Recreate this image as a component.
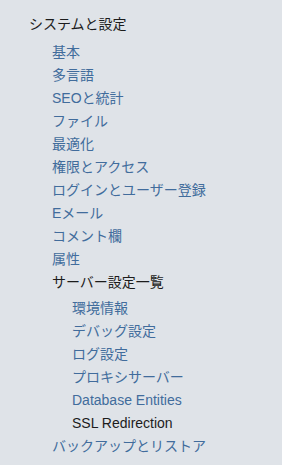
import React from "react";

const items: { label: string; active?: boolean; children?: { label: string; active?: boolean }[] }[] = [
  { label: "基本" },
  { label: "多言語" },
  { label: "SEOと統計" },
  { label: "ファイル" },
  { label: "最適化" },
  { label: "権限とアクセス" },
  { label: "ログインとユーザー登録" },
  { label: "Eメール" },
  { label: "コメント欄" },
  { label: "属性" },
  {
    label: "サーバー設定一覧",
    active: true,
    children: [
      { label: "環境情報" },
      { label: "デバッグ設定" },
      { label: "ログ設定" },
      { label: "プロキシサーバー" },
      { label: "Database Entities" },
      { label: "SSL Redirection", active: true },
    ],
  },
  { label: "バックアップとリストア" },
];

export default function App() {
  return (
    <div
      className="w-[282px] h-[465px] bg-[#dfe3e8] overflow-hidden pt-[13px] pl-[29px]"
      style={{ fontFamily: '"Liberation Sans", "Noto Sans CJK JP", sans-serif' }}
    >
      <div className="text-[14px] leading-[23px] text-[#1c1c1c]">システムと設定</div>
      <ul className="mt-[5px] pl-[23px] text-[14px] leading-[23px]">
        {items.map((it) => (
          <li key={it.label}>
            <a className={it.active ? "text-[#1c1c1c]" : "text-[#416c9c]"}>{it.label}</a>
            {it.children && (
              <ul className="pl-[20px] mt-[3px]">
                {it.children.map((c) => (
                  <li key={c.label} className={c.active ? "text-[#1c1c1c]" : "text-[#416c9c]"}>
                    {c.label}
                  </li>
                ))}
              </ul>
            )}
          </li>
        ))}
      </ul>
    </div>
  );
}
